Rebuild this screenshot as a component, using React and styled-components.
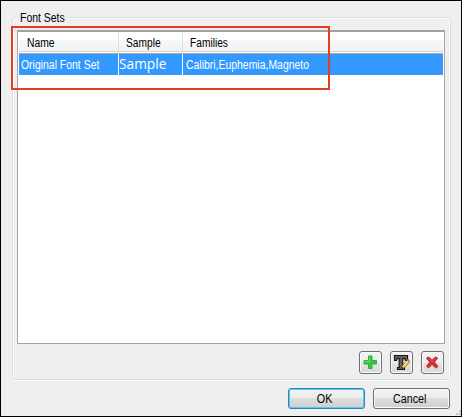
import React from "react";
import styled, { createGlobalStyle } from "styled-components";

const GlobalStyle = createGlobalStyle`
  * { box-sizing: border-box; }
  html, body { margin: 0; padding: 0; overflow: hidden; }
  body { font: 12px/14px "Liberation Sans", Arial, sans-serif; color: #000; }
`;

const Dialog = styled.main`
  position: relative;
  width: 462px;
  height: 417px;
  padding: 16px 10px 0 11px;
  border: 1px solid #000;
  background: #efefef;
`;

const Text = styled.span`
  display: inline-block;
  white-space: nowrap;
  transform: scaleX(${(p) => p.$stretch || 0.87});
  transform-origin: ${(p) => p.$origin || "left"} center;
`;

const Group = styled.section`
  position: relative;
  height: 363px;
  border: 1px solid #d5dfe5;
  border-radius: 3px;
  box-shadow: inset 1px 1px #fff, inset -1px 0 #fff, 0 1px #fff;
  padding: 12px 5px 0 4px;
`;

const Legend = styled.h1`
  position: absolute;
  top: -7px;
  left: 5px;
  width: 49px;
  margin: 0;
  padding-left: 2px;
  background: #efefef;
  font: inherit;
`;

const List = styled.div`
  height: 314px;
  background: #fff;
  border: 1px solid #a5a5a9;
  border-top: 2px solid #a0a0a5;
  padding: 0 1px;
`;

const Columns = styled.div`
  display: grid;
  grid-template-columns: 100px 64px 1fr;
`;

const Header = styled(Columns)`
  height: 22px;
  background: linear-gradient(#fff 0, #fff 8px, #f7f8f9 8px, #f1f2f4 19px, #d5d5d5 19px, #d5d5d5 20px, #fff 20px, #fff 21px, #a9a9a9 21px);
`;

const HeaderCell = styled.div`
  height: 19px;
  padding: 4px 0 0 ${(p) => p.$pad}px;
  border-right: ${(p) => (p.$last ? "none" : "1px solid #dedfe1")};
`;

const Row = styled(Columns)`
  height: 21px;
  background: #3399ff;
  color: #fff;
`;

const Cell = styled.div`
  padding: 4px 0 0 ${(p) => p.$pad}px;
  border-right: ${(p) => (p.$last ? "none" : "1px solid #fff")};
`;

const SampleText = styled.span`
  display: block;
  margin-top: -4px;
  font: 14px/20px "Open Sans", "Noto Sans", sans-serif;
  transform: scaleX(0.98);
  transform-origin: left;
`;

const Highlight = styled.div`
  position: absolute;
  left: 10px;
  top: 25px;
  width: 319px;
  height: 64px;
  border: 2px solid #e53e1c;
`;

const Tools = styled.div`
  display: flex;
  justify-content: flex-end;
  gap: 8px;
  margin-top: 7px;
  padding-right: 1px;
`;

const Button = styled.button`
  display: flex;
  align-items: center;
  justify-content: center;
  height: 21px;
  width: 77px;
  padding: 0;
  border: 1px solid ${(p) => (p.$primary ? "#3c7fb1" : "#707070")};
  border-radius: 3px;
  background: linear-gradient(#f3f3f3 0, #ebebeb 50%, #dddddd 50%, #cfcfcf 100%);
  box-shadow: inset 0 0 0 1px ${(p) => (p.$primary ? "#48d1f5" : "#fbfbfb")};
  font: inherit;
  color: #000;
`;

const CommandButton = styled(Button)`
  padding-right: 3px;
`;

const IconButton = styled(Button)`
  width: 23px;
  height: 23px;
  background: linear-gradient(#f3f3f3 0, #ededed 50%, #e4e4e4 50%, #d8d8d8 100%);
  svg { display: block; flex: none; }
`;

const Footer = styled.footer`
  display: flex;
  justify-content: flex-end;
  gap: 8px;
  margin-top: 8px;
  padding-right: 1px;
`;

const Grip = styled.svg`
  position: absolute;
  right: 0;
  bottom: 0;
`;

function PlusIcon() {
  return (
    <svg width="15" height="15" viewBox="0 0 15 15">
      <path d="M5.5 1h3.5v4.5h4.5v3.5h-4.5v4.5h-3.5v-4.5h-4.5v-3.5h4.5z" fill="#35c63e" stroke="#2fae42" />
      <path d="M6.5 2v4.5H2" fill="none" stroke="#6bdd64" />
    </svg>
  );
}

function EditFontIcon() {
  return (
    <svg width="17" height="17" viewBox="0 0 17 17">
      <path d="M1.5 1.5h13v5h-2l-1-2h-1.7v9h1.7v2h-7v-2h1.7v-9h-1.7l-1 2h-2z" fill="#606060" stroke="#171717" strokeWidth="1.2" />
      <path d="M8.2 15l1-3.2 5.3-5.8 2.1 1.9-5.3 5.9z" fill="#f3cf50" stroke="#69501e" strokeWidth=".7" />
      <path d="M10.2 12l4.6-5.2" stroke="#fff3a1" />
      <path d="M14 6l1.2-1.3 1.8 1.8-1 1.3z" fill="#d9675a" />
      <path d="M8.2 15l.7-2.2 1.8 1.5z" fill="#2c211a" />
    </svg>
  );
}

function DeleteIcon() {
  return (
    <svg width="15" height="15" viewBox="0 0 15 15">
      <path d="M1.5 3l2.5-1 3 3.2 3.5-3.2 2 1-3 4.2 3.5 4.3-2.3 1.5-3.7-3.5-3.5 3.5-2-1.8 3.2-4z" fill="#d52d32" stroke="#b52a30" />
      <path d="M3.5 3l3.5 3.6L10.7 3" fill="none" stroke="#e65555" />
    </svg>
  );
}

export default function App() {
  return (
    <>
      <GlobalStyle />
      <Dialog>
        <Group>
          <Legend><Text>Font Sets</Text></Legend>
          <List>
            <Header>
              <HeaderCell $pad={8}><Text $stretch={0.86}>Name</Text></HeaderCell>
              <HeaderCell $pad={7}><Text $stretch={0.85}>Sample</Text></HeaderCell>
              <HeaderCell $pad={7} $last><Text $stretch={0.85}>Families</Text></HeaderCell>
            </Header>
            <Row>
              <Cell $pad={2}><Text>Original Font Set</Text></Cell>
              <Cell $pad={0}><SampleText>Sample</SampleText></Cell>
              <Cell $pad={3} $last><Text>Calibri,Euphemia,Magneto</Text></Cell>
            </Row>
          </List>
          <Tools>
            <IconButton aria-label="Add"><PlusIcon /></IconButton>
            <IconButton aria-label="Edit"><EditFontIcon /></IconButton>
            <IconButton aria-label="Delete"><DeleteIcon /></IconButton>
          </Tools>
        </Group>
        <Footer>
          <CommandButton $primary><Text $origin="center" $stretch={0.9}>OK</Text></CommandButton>
          <CommandButton><Text $origin="center" $stretch={0.89}>Cancel</Text></CommandButton>
        </Footer>
        <Highlight />
        <Grip width="6" height="6" viewBox="0 0 6 6">
          <path d="M4 0h2v2H4zM1 3h2v2H1zM4 3h2v2H4z" fill="#c1c1c1" />
        </Grip>
      </Dialog>
    </>
  );
}
